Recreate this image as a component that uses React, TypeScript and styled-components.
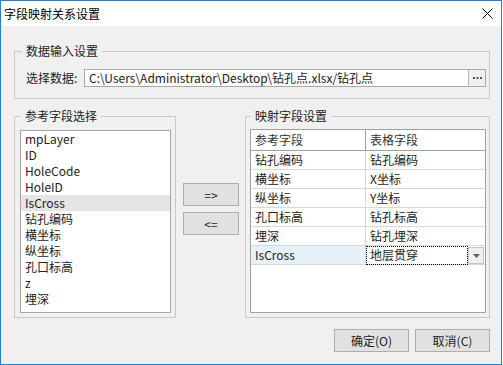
import { Fragment } from "react";
import styled, { createGlobalStyle } from "styled-components";

const GlobalStyle = createGlobalStyle`
  html, body {
    margin: 0;
    padding: 0;
    background: #ffffff;
  }
  * {
    box-sizing: border-box;
  }
`;

const FONT = `"Noto Sans CJK SC", "Noto Sans", sans-serif`;

const Window = styled.div`
  width: 502px;
  height: 365px;
  border: 1px solid #1a83d8;
  display: flex;
  flex-direction: column;
  font-family: ${FONT};
  font-size: 12px;
  color: #222;
  background: #f0f0f0;
`;

const TitleBar = styled.div`
  height: 25px;
  background: #ffffff;
  display: flex;
  align-items: center;
  justify-content: space-between;
  padding: 0 8px 0 3px;
`;

const TitleText = styled.span`
  font-size: 12px;
  line-height: 16px;
  color: #000;
`;

const Content = styled.div`
  flex: 1;
  display: flex;
  flex-direction: column;
  padding: 17px 11px 0 13px;
`;

const Group = styled.fieldset<{ $pad: string }>`
  margin: 0;
  padding: ${(p) => p.$pad};
  border: 1px solid #c8c8c8;
  min-width: 0;
`;

const Legend = styled.legend<{ $shift: number }>`
  padding: 0 4px;
  margin-left: ${(p) => p.$shift}px;
  line-height: 16px;
  font-size: 12px;
`;

const InputRow = styled.div`
  display: flex;
  align-items: center;
`;

const FieldLabel = styled.span`
  width: 58px;
  line-height: 16px;
  white-space: nowrap;
`;

const PathBox = styled.div`
  flex: 1;
  height: 18px;
  display: flex;
  border: 1px solid #a9a9a9;
  background: #fff;
`;

const PathText = styled.span`
  flex: 1;
  padding-left: 4px;
  line-height: 16px;
  white-space: nowrap;
  overflow: hidden;
`;

const BrowseButton = styled.span`
  width: 17px;
  border-left: 1px solid #b4b4b4;
  background: #f0f0f0;
  display: flex;
  align-items: center;
  justify-content: center;
`;

const GroupRow = styled.div`
  display: flex;
  height: 210px;
  margin-top: 9px;
`;

const ListBox = styled.div`
  height: 183px;
  border: 1px solid #a5a5a5;
  background: #fff;
  overflow: hidden;
`;

const ListItem = styled.div<{ $selected?: boolean }>`
  height: 16px;
  line-height: 16px;
  padding-left: 4px;
  white-space: nowrap;
  background: ${(p) => (p.$selected ? "#e5e5e5" : "transparent")};
`;

const MoveColumn = styled.div`
  width: 69px;
  display: flex;
  flex-direction: column;
  gap: 6px;
  padding: 75px 0 0 7px;
`;

const Button = styled.button<{ $w: number }>`
  width: ${(p) => p.$w}px;
  height: 23px;
  padding: 0;
  margin: 0;
  border: 1px solid #adadad;
  background: #e1e1e1;
  font-family: ${FONT};
  font-size: 12px;
  color: #222;
  line-height: 16px;
`;

const Table = styled.div`
  height: 184px;
  border: 1px solid #a0a0a0;
  background: #fff;
  display: grid;
  grid-template-columns: 115px 1fr;
  grid-template-rows: 21px;
  grid-auto-rows: 19px;
  align-content: start;
`;

const HeadCell = styled.div<{ $first?: boolean }>`
  height: 21px;
  line-height: 20px;
  padding-left: 4px;
  border-bottom: 1px solid #a0a0a0;
  border-right: ${(p) => (p.$first ? "1px solid #a0a0a0" : "none")};
  color: #333;
`;

const Cell = styled.div<{ $first?: boolean; $active?: boolean }>`
  height: 19px;
  line-height: 18px;
  padding-left: 4px;
  border-bottom: 1px solid #d9d9d9;
  border-right: ${(p) => (p.$first ? "1px solid #d9d9d9" : "none")};
  background: ${(p) => (p.$active ? "#e5f1fb" : "#fff")};
  white-space: nowrap;
`;

const ComboCell = styled.div`
  height: 19px;
  display: flex;
  border-bottom: 1px solid #d9d9d9;
  padding-right: 1px;
`;

const ComboText = styled.span`
  flex: 1;
  height: 19px;
  line-height: 16px;
  padding-left: 3px;
  border: 1px dotted #000;
`;

const ComboArrow = styled.span`
  width: 16px;
  height: 17px;
  margin-top: 1px;
  border: 1px solid #c3c3c3;
  background: #f0f0f0;
  display: flex;
  align-items: center;
  justify-content: center;
`;

const Footer = styled.div`
  display: flex;
  justify-content: flex-end;
  gap: 6px;
  margin-top: 11px;
`;

const listItems = [
  "mpLayer",
  "ID",
  "HoleCode",
  "HoleID",
  "IsCross",
  "钻孔编码",
  "横坐标",
  "纵坐标",
  "孔口标高",
  "z",
  "埋深",
];

const mapping = [
  ["钻孔编码", "钻孔编码"],
  ["横坐标", "X坐标"],
  ["纵坐标", "Y坐标"],
  ["孔口标高", "钻孔标高"],
  ["埋深", "钻孔埋深"],
];

const App = () => {
  return (
    <>
      <GlobalStyle />
      <Window>
        <TitleBar>
          <TitleText>字段映射关系设置</TitleText>
          <svg width="11" height="11" viewBox="0 0 11 11">
            <path d="M0.5 0.5 L10.5 10.5 M10.5 0.5 L0.5 10.5" stroke="#000" strokeWidth="1" />
          </svg>
        </TitleBar>
        <Content>
          <Group $pad="10px 3px 11px 11px">
            <Legend $shift={-4}>数据输入设置</Legend>
            <InputRow>
              <FieldLabel>选择数据:</FieldLabel>
              <PathBox>
                <PathText>C:\Users\Administrator\Desktop\钻孔点.xlsx/钻孔点</PathText>
                <BrowseButton>
                  <svg width="9" height="3" viewBox="0 0 9 3">
                    <rect x="0" y="0" width="2" height="2" fill="#555" />
                    <rect x="3.5" y="0" width="2" height="2" fill="#555" />
                    <rect x="7" y="0" width="2" height="2" fill="#555" />
                  </svg>
                </BrowseButton>
              </PathBox>
            </InputRow>
          </Group>

          <GroupRow>
            <Group $pad="6px 4px 4px 5px" style={{ width: 162 }}>
              <Legend $shift={1}>参考字段选择</Legend>
              <ListBox>
                {listItems.map((item) => (
                  <ListItem key={item} $selected={item === "IsCross"}>
                    {item}
                  </ListItem>
                ))}
              </ListBox>
            </Group>

            <MoveColumn>
              <Button $w={56}>=&gt;</Button>
              <Button $w={56}>&lt;=</Button>
            </MoveColumn>

            <Group $pad="5px 3px 4px 4px" style={{ width: 245 }}>
              <Legend $shift={1}>映射字段设置</Legend>
              <Table>
                <HeadCell $first>参考字段</HeadCell>
                <HeadCell>表格字段</HeadCell>
                {mapping.map(([ref, col]) => (
                  <Fragment key={ref}>
                    <Cell $first>{ref}</Cell>
                    <Cell>{col}</Cell>
                  </Fragment>
                ))}
                <Cell $first $active>
                  IsCross
                </Cell>
                <ComboCell>
                  <ComboText>地层贯穿</ComboText>
                  <ComboArrow>
                    <svg width="7" height="4" viewBox="0 0 7 4">
                      <path d="M0 0 H7 L3.5 4 Z" fill="#606060" />
                    </svg>
                  </ComboArrow>
                </ComboCell>
              </Table>
            </Group>
          </GroupRow>

          <Footer>
            <Button $w={75}>确定(O)</Button>
            <Button $w={75}>取消(C)</Button>
          </Footer>
        </Content>
      </Window>
    </>
  );
};

export default App;
